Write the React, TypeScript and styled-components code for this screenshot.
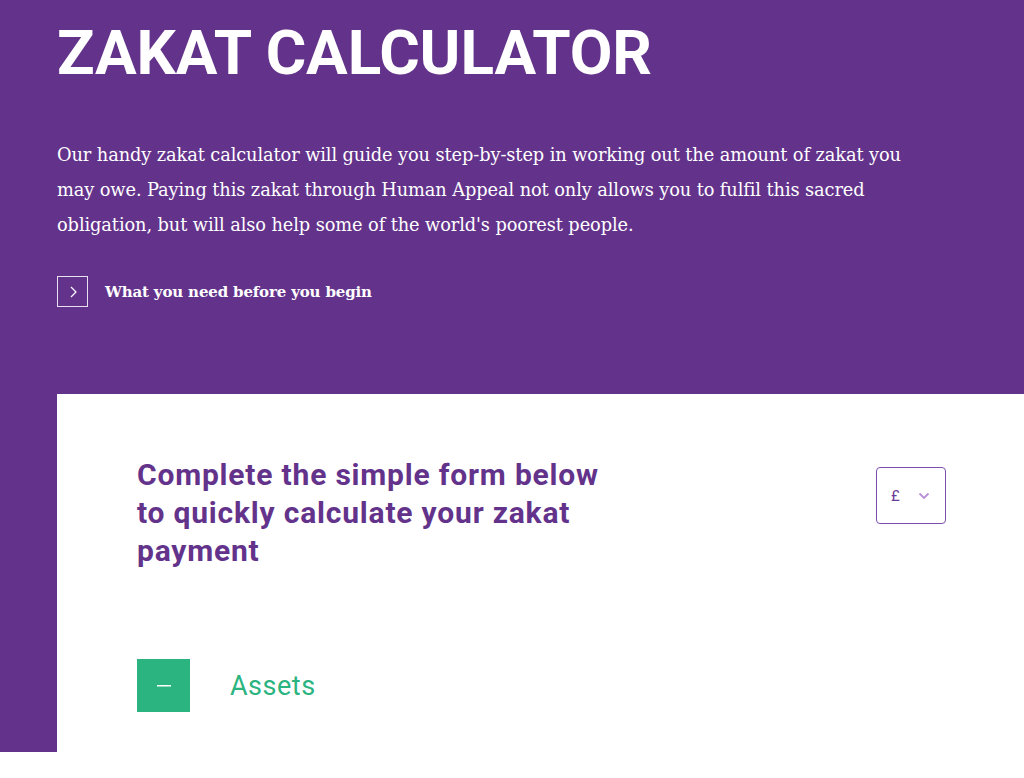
import React from 'react';
import styled, { createGlobalStyle } from 'styled-components';

const GlobalStyle = createGlobalStyle`
  body {
    margin: 0;
    background: #ffffff;
  }
`;

const Page = styled.div`
  min-height: 778px;
  background: linear-gradient(#63338b 0, #63338b 752px, #ffffff 752px);
`;

const Hero = styled.header`
  padding: 15px 57px 0 57px;
  height: 380px;
  box-sizing: border-box;
  color: #ffffff;
`;

const Title = styled.h1`
  margin: 0;
  font-family: Roboto, 'Liberation Sans', sans-serif;
  font-weight: 700;
  font-size: 62px;
  line-height: 76px;
  letter-spacing: -0.1px;
`;

const Intro = styled.p`
  margin: 46px 0 0 0;
  max-width: 880px;
  font-family: 'DejaVu Serif', 'Liberation Serif', serif;
  font-size: 17.8px;
  line-height: 35px;
  letter-spacing: -0.1px;
`;

const NeedLink = styled.a`
  display: flex;
  align-items: center;
  gap: 17px;
  margin-top: 34px;
  color: #ffffff;
  text-decoration: none;
  font-family: 'DejaVu Serif', 'Liberation Serif', serif;
  font-weight: 700;
  font-size: 15px;
  letter-spacing: -0.15px;
`;

const ArrowBox = styled.span`
  width: 31px;
  height: 31px;
  box-sizing: border-box;
  border: 1px solid rgba(255, 255, 255, 0.85);
  display: flex;
  align-items: center;
  justify-content: center;
`;

const Card = styled.section`
  margin-left: 57px;
  margin-top: 14px;
  min-height: 384px;
  background: #ffffff;
  padding: 62px 78px 0 80px;
  box-sizing: border-box;
`;

const CardHeader = styled.div`
  display: flex;
  justify-content: space-between;
  align-items: flex-start;
`;

const FormHeading = styled.h2`
  margin: 0;
  max-width: 490px;
  color: #63338b;
  font-family: Roboto, 'Liberation Sans', sans-serif;
  font-weight: 700;
  font-size: 30px;
  line-height: 38px;
  letter-spacing: 0.8px;
`;

const CurrencySelect = styled.button`
  margin-top: 11px;
  width: 70px;
  height: 57px;
  box-sizing: border-box;
  border: 1.5px solid #7b4fae;
  border-radius: 4px;
  background: #ffffff;
  display: flex;
  align-items: center;
  gap: 18px;
  padding: 0 0 0 14px;
  color: #6a3b97;
  font-family: Roboto, 'Liberation Sans', sans-serif;
  font-size: 15px;
`;

const SectionRow = styled.div`
  display: flex;
  align-items: center;
  gap: 40px;
  margin-top: 89px;
`;

const ToggleSquare = styled.span<{ $color: string }>`
  width: 53px;
  height: 53px;
  background: ${(p) => p.$color};
  display: flex;
  align-items: center;
  justify-content: center;
`;

const SectionLabel = styled.span<{ $color: string }>`
  color: ${(p) => p.$color};
  font-family: Roboto, 'Liberation Sans', sans-serif;
  font-size: 27px;
  letter-spacing: 0.5px;
`;

const App = () => {
  return (
    <Page>
      <GlobalStyle />
      <Hero>
        <Title>ZAKAT CALCULATOR</Title>
        <Intro>
          Our handy zakat calculator will guide you step-by-step in working out the amount of zakat you
          may owe. Paying this zakat through Human Appeal not only allows you to fulfil this sacred
          obligation, but will also help some of the world's poorest people.
        </Intro>
        <NeedLink href="#">
          <ArrowBox>
            <svg width="10" height="14" viewBox="0 0 10 14" fill="none">
              <path d="M3 2 L8 7 L3 12" stroke="#ffffff" strokeWidth="1.2" />
            </svg>
          </ArrowBox>
          What you need before you begin
        </NeedLink>
      </Hero>
      <Card>
        <CardHeader>
          <FormHeading>Complete the simple form below to quickly calculate your zakat payment</FormHeading>
          <CurrencySelect>
            £
            <svg width="12" height="8" viewBox="0 0 12 8" fill="none">
              <path d="M1.5 1.5 L6 6 L10.5 1.5" stroke="#b890d8" strokeWidth="1.8" />
            </svg>
          </CurrencySelect>
        </CardHeader>
        <SectionRow>
          <ToggleSquare $color="#2bb47f">
            <svg width="14" height="2" viewBox="0 0 14 2">
              <rect width="14" height="1.5" fill="#ffffff" />
            </svg>
          </ToggleSquare>
          <SectionLabel $color="#2bb47f">Assets</SectionLabel>
        </SectionRow>
      </Card>
    </Page>
  );
};

export default App;
